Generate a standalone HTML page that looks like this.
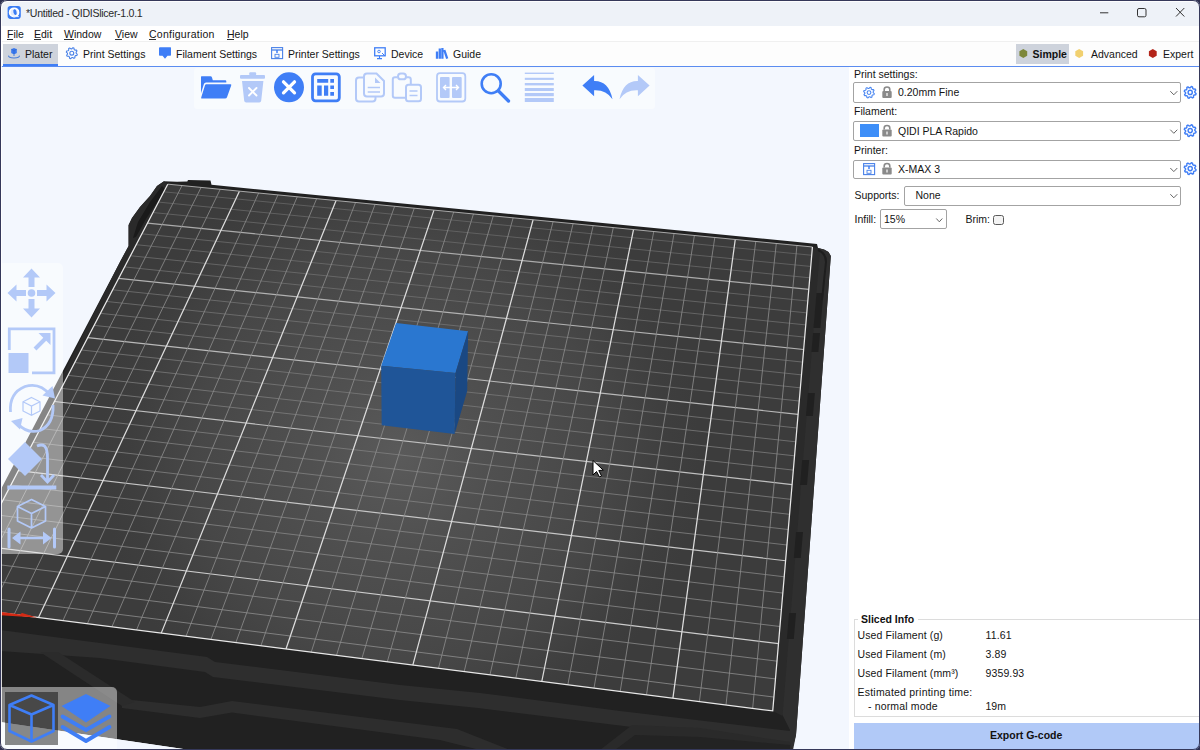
<!DOCTYPE html><html><head><meta charset="utf-8"><style>
html,body{margin:0;padding:0;width:1200px;height:750px;overflow:hidden;background:#f3f7fe;font-family:"Liberation Sans",sans-serif;}
.t{position:absolute;white-space:pre;line-height:1;color:#1a1a1a;}
.r{position:absolute;}
svg{position:absolute;}
</style></head><body>
<svg style="left:0;top:0" width="849" height="750" viewBox="0 0 849 750"><defs>
<radialGradient id="bedg" gradientUnits="userSpaceOnUse" cx="400" cy="455" r="300">
<stop offset="0" stop-color="#5a5a5a"/><stop offset="0.3" stop-color="#505050"/><stop offset="0.68" stop-color="#474747"/><stop offset="0.9" stop-color="#3e3e3e"/><stop offset="1" stop-color="#3c3c3c"/>
</radialGradient>
</defs><polygon points="164,181.2 177,181.8 187.3,181.5 188,180 210.5,180.5 211.5,184.8 795,241.8 817,244 818,248 824,249.5 828.5,252 830.8,256 796,735 792,750 190,750 0,722 0,491 121,260 128.6,246 128.6,225 132,218 140,207 150,196 157,186" fill="#212121"/><polygon points="164,181.2 157,186 150,196 140,207 132,218 128.6,225 128.6,246 121,260 60,380 66,380 167.8,184.4" fill="#2a2a2a"/><polygon points="162,186 150,202 138,222 133,238 136,237 146,219 158,201 165,189" fill="#1a1a1a"/><polygon points="818,248 824,249.5 828.5,252 830.8,256 796,735 793,750 780,750 790,730 781,712 813,247.5" fill="#2f2f2f"/><polygon points="812.4,247 820,249 782.5,716 772.7,711" fill="#2a2a2a"/><polygon points="816.46,293 823.46,293 820.47,328 813.47,328" fill="#202020"/><polygon points="813.04,333 820.04,333 818.41,352 811.41,352" fill="#202020"/><polygon points="807.9,393 814.9,393 812.93,416 805.93,416" fill="#202020"/><polygon points="802.17,460 809.17,460 807.03,485 800.03,485" fill="#202020"/><polygon points="796,532 803,532 800.78,558 793.78,558" fill="#202020"/><polygon points="789.07,613 796.07,613 793.84,639 786.84,639" fill="#202020"/><path d="M818 250Q826 253 826 262L822 300" fill="none" stroke="#1e1e1e" stroke-width="2"/><polygon points="0,630 100,643 207,657 215,662 400,685 480,693 620,711 790,731 790,742 632,727 478,708 400,700 213,677 205,672 100,658 0,651" fill="#2e2e2e"/><polygon points="122,699 200,707 232,701 457,729 510,750 480,750 440,740 232,712.5 200,718 122,708" fill="#2d2d2d"/><polygon points="632,725 700,728 790,742 792,750 600,750" fill="#2a2a2a"/><polygon points="635,735 700,737 790,745 790,750 615,750" fill="#232323"/><polygon points="40,652 58,652 135,702 122,706" fill="#2b2b2b"/><polygon points="0,722 190,750 0,750" fill="#f3f7fe"/><polygon points="167.76,184.17 812.42,246.98 772.74,710.88 -52.22,605.97" fill="url(#bedg)"/><path d="M-45.75 593.56L773.92 697.07" stroke="#8f8f8f" stroke-width="0.8"/><path d="M-37.26 577.27L775.47 678.95" stroke="#8e8e8e" stroke-width="0.8"/><path d="M-28.9 561.25L776.99 661.16" stroke="#8c8c8c" stroke-width="0.8"/><path d="M-20.69 545.5L778.49 643.68" stroke="#cdcdcd" stroke-width="1.2"/><path d="M-12.62 530.02L779.96 626.51" stroke="#8a8a8a" stroke-width="0.8"/><path d="M-4.67 514.79L781.4 609.64" stroke="#898989" stroke-width="0.8"/><path d="M3.14 499.82L782.82 593.07" stroke="#878787" stroke-width="0.8"/><path d="M10.82 485.08L784.21 576.77" stroke="#868686" stroke-width="0.8"/><path d="M18.38 470.59L785.58 560.76" stroke="#c6c6c6" stroke-width="1.2"/><path d="M25.82 456.33L786.93 545.01" stroke="#838383" stroke-width="0.8"/><path d="M33.14 442.3L788.25 529.53" stroke="#828282" stroke-width="0.8"/><path d="M40.34 428.48L789.56 514.3" stroke="#818181" stroke-width="0.8"/><path d="M47.43 414.89L790.84 499.33" stroke="#808080" stroke-width="0.8"/><path d="M54.41 401.5L792.1 484.6" stroke="#bfbfbf" stroke-width="1.2"/><path d="M61.28 388.33L793.34 470.1" stroke="#7d7d7d" stroke-width="0.8"/><path d="M68.05 375.35L794.56 455.84" stroke="#7c7c7c" stroke-width="0.8"/><path d="M74.72 362.57L795.76 441.81" stroke="#7a7a7a" stroke-width="0.8"/><path d="M81.28 349.98L796.94 428" stroke="#797979" stroke-width="0.8"/><path d="M87.75 337.59L798.1 414.4" stroke="#b9b9b9" stroke-width="1.2"/><path d="M94.12 325.37L799.25 401.02" stroke="#767676" stroke-width="0.8"/><path d="M100.39 313.34L800.37 387.84" stroke="#757575" stroke-width="0.8"/><path d="M106.58 301.48L801.48 374.87" stroke="#747474" stroke-width="0.8"/><path d="M112.67 289.8L802.58 362.09" stroke="#737373" stroke-width="0.8"/><path d="M118.68 278.28L803.65 349.5" stroke="#b2b2b2" stroke-width="1.2"/><path d="M124.6 266.93L804.71 337.11" stroke="#707070" stroke-width="0.8"/><path d="M130.43 255.74L805.76 324.9" stroke="#6f6f6f" stroke-width="0.8"/><path d="M136.19 244.7L806.79 312.86" stroke="#6d6d6d" stroke-width="0.8"/><path d="M141.86 233.83L807.8 301.01" stroke="#6c6c6c" stroke-width="0.8"/><path d="M147.46 223.1L808.8 289.32" stroke="#ababab" stroke-width="1.2"/><path d="M152.97 212.52L809.79 277.81" stroke="#6a6a6a" stroke-width="0.8"/><path d="M158.41 202.09L810.76 266.46" stroke="#686868" stroke-width="0.8"/><path d="M163.78 191.8L811.72 255.27" stroke="#676767" stroke-width="0.8"/><path d="M-34.16 608.26L182.04 185.57M-10.01 611.33L201.12 187.43M14.21 614.41L220.26 189.29M62.9 620.61L258.67 193.03M87.37 623.72L277.95 194.91M111.91 626.84L297.27 196.79M136.54 629.97L316.65 198.68M186.03 636.26L355.55 202.47M210.9 639.43L375.08 204.37M235.85 642.6L394.65 206.28M260.88 645.78L414.28 208.19M311.19 652.18L453.68 212.03M336.47 655.4L473.46 213.96M361.84 658.62L493.28 215.89M387.29 661.86L513.16 217.82M438.44 668.36L553.07 221.71M464.15 671.63L573.1 223.66M489.94 674.91L593.19 225.62M515.82 678.2L613.32 227.58M567.83 684.82L653.75 231.52M593.97 688.14L674.05 233.5M620.2 691.48L694.4 235.48M646.51 694.82L714.8 237.47M699.41 701.55L755.75 241.46M726 704.93L776.31 243.46M752.67 708.32L796.93 245.47" stroke="#8a8a8a" stroke-width="0.85" fill="none"/><path d="M38.52 617.51L239.44 191.16M161.24 633.11L336.08 200.57M286 648.98L433.95 210.11M412.82 665.11L533.09 219.77M541.78 681.5L633.51 229.55M672.92 698.18L735.25 239.46" stroke="#dcdcdc" stroke-width="1.25" fill="none"/><path d="M167.76 184.17L812.42 246.98" stroke="#a8a8a8" stroke-width="1"/><path d="M812.42 246.98L772.74 710.88L-52.22 605.97L167.76 184.17" fill="none" stroke="#e8e8e8" stroke-width="1.25"/><path d="M0 611.8L20 614.5L22 613L37 617.6L0 615.2Z" fill="#d42a14"/><polygon points="396.1,323 468.1,331.2 455.5,373 381.2,365.8" fill="#2a77d0"/><polygon points="381.2,365.8 455.5,373 454.6,433.9 381.7,425.2" fill="#1f5598"/><polygon points="455.5,373 468.1,331.2 467.2,391 454.6,433.9" fill="#1a4883"/><path d="M593 460.5L593 475L596.5 471.5L599.5 477L601.5 476L598.8 470.5L603.3 470.2Z" fill="#fff" stroke="#000" stroke-width="1"/></svg>
<div class="r" style="left:194px;top:68px;width:461px;height:41px;background:rgba(255,255,255,0.45);border-radius:3px;"></div>
<svg style="left:0;top:0" width="849" height="750" viewBox="0 0 849 750"><path d="M201.5 76.3H210.5Q211.6 76.3 212 77.5L212.8 80.3H225.3Q226.3 80.3 226.3 81.3V82.5H206Q204.4 82.5 203.9 84L201 93.2V77Q201 76.3 201.5 76.3Z" fill="#3f7ef6"/><path d="M206.2 84.3H230.5Q231.6 84.3 231.2 85.5L227 97.3Q226.5 98.6 225 98.6H202.2Q200.8 98.6 201.2 97.4L205 85.3Q205.3 84.3 206.2 84.3Z" fill="#3f7ef6"/><rect x="249.3" y="72.3" width="6.8" height="3.5" rx="1" fill="#b3c9f8"/><rect x="240" y="75" width="25" height="3.7" rx="1" fill="#b3c9f8"/><path d="M242 81H263.4L261.2 100.8Q261 102.6 259.2 102.6H246.2Q244.4 102.6 244.2 100.8Z" fill="#b3c9f8"/><path d="M249 88L256.5 95.5M256.5 88L249 95.5" stroke="#fff" stroke-width="1.9" stroke-linecap="round"/><circle cx="289" cy="87.3" r="15" fill="#3f7ef6"/><path d="M283.5 81.8L294.5 92.8M294.5 81.8L283.5 92.8" stroke="#fff" stroke-width="3.3" stroke-linecap="round"/><rect x="312.5" y="73.8" width="26.8" height="27" rx="3" fill="none" stroke="#3f7ef6" stroke-width="2.8"/><path d="M317.2 79H328.2V82.7H317.2ZM330.3 79H334V82.7H330.3ZM330.3 85.5H334V89H330.3ZM330.3 92H334V95.8H330.3ZM317.2 85.5H321.7V95.8H317.2ZM324 85.5H328.2V95.8H324Z" fill="#3f7ef6"/><path d="M363.5 77.5H359Q356 77.5 356 80.5V98.5Q356 101.5 359 101.5H372.5Q375.5 101.5 375.5 98.5V97" fill="none" stroke="#b3c9f8" stroke-width="2"/><path d="M367 73.5H376.5L384 81V93.5Q384 96.5 381 96.5H367Q364 96.5 364 93.5V76.5Q364 73.5 367 73.5Z" fill="none" stroke="#b3c9f8" stroke-width="2"/><path d="M375 77.5L380.5 83H375Z" fill="#b3c9f8"/><path d="M367.7 87.5H380M367.7 92H380" stroke="#b3c9f8" stroke-width="1.5"/><path d="M405 97.8H395Q392.8 97.8 392.8 95.6V79.5Q392.8 77.3 395 77.3H397.5M406.2 77.3H408.5Q410.8 77.3 410.8 79.5V84.5" fill="none" stroke="#b3c9f8" stroke-width="2"/><rect x="398" y="73.5" width="8" height="5.8" rx="2.9" fill="none" stroke="#b3c9f8" stroke-width="2"/><rect x="406" y="84.8" width="15" height="16.5" rx="2.5" fill="none" stroke="#b3c9f8" stroke-width="2"/><path d="M409.5 91H417.5M409.5 95.5H417.5" stroke="#b3c9f8" stroke-width="1.5"/><rect x="437" y="73.2" width="28.3" height="28.3" rx="3" fill="none" stroke="#b3c9f8" stroke-width="1.8"/><rect x="440" y="77" width="9.6" height="21" rx="1" fill="#b3c9f8"/><rect x="452" y="77" width="9.7" height="21" rx="1" fill="#b3c9f8"/><path d="M443.5 87.5H458.5M446 85L443.5 87.5L446 90M456 85L458.5 87.5L456 90" stroke="#fff" stroke-width="1.4" fill="none"/><circle cx="491.2" cy="83.7" r="9.5" fill="none" stroke="#3f7ef6" stroke-width="2.6"/><path d="M498.5 91L508.5 101" stroke="#3f7ef6" stroke-width="3.3" stroke-linecap="round"/><rect x="524.8" y="72.6" width="29" height="1.4" fill="#b3c9f8"/><rect x="524.8" y="77.8" width="29" height="2.1" fill="#b3c9f8"/><rect x="524.8" y="83" width="29" height="2.4" fill="#b3c9f8"/><rect x="524.8" y="88" width="29" height="3" fill="#b3c9f8"/><rect x="524.8" y="93" width="29" height="3.2" fill="#b3c9f8"/><rect x="524.8" y="98" width="29" height="4" fill="#b3c9f8"/><path d="M582.4 85.4L594.1 75.1V81.1Q608.5 80.6 612.5 99.2Q606 89.6 594.1 90.3V96.3Z" fill="#3f7ef6"/><path d="M649.6 85.4L637.9 75.1V81.1Q623.5 80.6 619.5 99.2Q626 89.6 637.9 90.3V96.3Z" fill="#b3c9f8"/></svg><div class="r" style="left:1px;top:262.5px;width:61.5px;height:291px;background:rgba(255,255,255,0.45);border-radius:0 5px 5px 0;"></div>
<svg style="left:0;top:0" width="849" height="750" viewBox="0 0 849 750"><g fill="#b3c9f8"><path d="M31.5 268.5L40 277.5H34.5V287H28.5V277.5H23Z"/><path d="M31.5 317.5L40 308.5H34.5V299H28.5V308.5H23Z"/><path d="M7.5 293L16.5 284.5V290H26V296H16.5V301.5Z"/><path d="M55.5 293L46.5 284.5V290H37V296H46.5V301.5Z"/><circle cx="31.5" cy="293" r="3.8"/></g><path d="M9.3 350V328.8H54V372.8H32" fill="none" stroke="#b3c9f8" stroke-width="2.8"/><rect x="8.5" y="353" width="20" height="20" fill="#b3c9f8"/><path d="M35 349L46 338" stroke="#b3c9f8" stroke-width="4"/><path d="M38.5 333H50.5V345Z" fill="#b3c9f8"/><path d="M10.5 412Q9 393 25 386.5Q40 382 50 395" fill="none" stroke="#b3c9f8" stroke-width="2.8"/><path d="M42.5 395.5L55 398.5L52.5 386Z" fill="#b3c9f8"/><path d="M53 405Q54 424 40 430.5Q27 434 18 424" fill="none" stroke="#b3c9f8" stroke-width="2.8"/><path d="M11 421L22.5 418L20 429.5Z" fill="#b3c9f8"/><path d="M31.5 397.5L40 401.8V411L31.5 415.3L23 411V401.8Z M23 401.8L31.5 406L40 401.8M31.5 406V415.3" fill="none" stroke="#b3c9f8" stroke-width="1.2"/><path d="M25 442L42 459L25 476L8 459Z" fill="#b3c9f8"/><path d="M37 446Q41.5 444 44.5 446Q47.5 449 47.5 458V480" fill="none" stroke="#b3c9f8" stroke-width="2.8"/><path d="M41 475L47.5 482L54 475" fill="none" stroke="#b3c9f8" stroke-width="2.8"/><rect x="7.3" y="485.5" width="49" height="4" fill="#b3c9f8"/><path d="M31.5 499.5L45.5 506.5V521L31.5 528L17.5 521V506.5Z M17.5 506.5L31.5 513.5L45.5 506.5M31.5 513.5V528" fill="none" stroke="#b3c9f8" stroke-width="1.7" stroke-linejoin="round"/><path d="M9 529V547M54.5 529V547" stroke="#b3c9f8" stroke-width="3" stroke-linecap="round"/><path d="M14 538H49.5" stroke="#b3c9f8" stroke-width="2.6"/><path d="M20.5 531.5L12 538L20.5 544.5ZM43 531.5L51.5 538L43 544.5Z" fill="#b3c9f8"/></svg><div class="r" style="left:1px;top:687px;width:115.5px;height:63px;background:rgba(255,255,255,0.45);border-radius:0 5px 0 0;"></div>
<div class="r" style="left:5px;top:692px;width:53px;height:53px;background:rgba(0,0,0,0.46);"></div>
<svg style="left:0;top:0" width="849" height="750" viewBox="0 0 849 750"><path d="M31.5 695.5L53.5 705V731L31.5 741.5L9.5 731V705Z M9.5 705L31.5 714.5L53.5 705M31.5 714.5V741.5" fill="none" stroke="#3f7ef6" stroke-width="2.6" stroke-linejoin="round"/><path d="M86 694L110.5 706L86 722.5L61.5 706Z" fill="#3f7ef6"/><path d="M62.5 716.5L86 730L109.5 716.5" fill="none" stroke="#3f7ef6" stroke-width="3.8" stroke-linejoin="round" stroke-linecap="round"/><path d="M62.5 727L86 741L109.5 727" fill="none" stroke="#3f7ef6" stroke-width="3.8" stroke-linejoin="round" stroke-linecap="round"/></svg><div class="r" style="left:0px;top:0px;width:1200px;height:26px;background:#eef2f8;"></div>
<div class="r" style="left:0px;top:26px;width:1200px;height:15px;background:#ffffff;"></div>
<div class="r" style="left:0px;top:41px;width:1200px;height:25px;background:#fdfdfd;"></div>
<div class="r" style="left:0px;top:41px;width:1200px;height:1px;background:#f0f0f0;"></div>
<div class="r" style="left:0px;top:66px;width:1200px;height:1px;background:#5b8cf0;"></div>
<svg style="left:0;top:0" width="30" height="26" viewBox="0 0 30 26"><rect x="7.6" y="5.9" width="13.2" height="13" rx="2.8" fill="#3a7cf4"/><ellipse cx="14.1" cy="12.4" rx="4.4" ry="4.1" fill="#dfe9fd" stroke="#fff" stroke-width="1.8"/><ellipse cx="15" cy="12.1" rx="1.6" ry="2.9" transform="rotate(-15 15 12.1)" fill="#3a7cf4"/><path d="M13 16.6H18.8" stroke="#e8f0ff" stroke-width="1"/></svg><div class="t" style="left:26px;top:7.83px;font-size:10.6px;color:#2a2a2a;letter-spacing:-0.3px;">*Untitled - QIDISlicer-1.0.1</div>
<svg style="left:1090px;top:0" width="110" height="26" viewBox="0 0 110 26"><path d="M10 12.8H18.3" stroke="#333" stroke-width="1"/><rect x="47.5" y="8.5" width="8.5" height="8.3" rx="1.5" fill="none" stroke="#333" stroke-width="1"/><path d="M86 8L94.3 16.5M94.3 8L86 16.5" stroke="#333" stroke-width="1"/></svg><div class="t" style="left:7px;top:28.61px;font-size:10.5px;color:#141414;">File</div>
<div class="r" style="left:7px;top:38.6px;width:6px;height:1px;background:#333;"></div>
<div class="t" style="left:34px;top:28.61px;font-size:10.5px;color:#141414;">Edit</div>
<div class="r" style="left:34px;top:38.6px;width:7px;height:1px;background:#333;"></div>
<div class="t" style="left:64px;top:28.61px;font-size:10.5px;color:#141414;">Window</div>
<div class="r" style="left:64px;top:38.6px;width:10px;height:1px;background:#333;"></div>
<div class="t" style="left:115px;top:28.61px;font-size:10.5px;color:#141414;">View</div>
<div class="r" style="left:115px;top:38.6px;width:7px;height:1px;background:#333;"></div>
<div class="t" style="left:149px;top:28.61px;font-size:10.5px;color:#141414;letter-spacing:0.25px;">Configuration</div>
<div class="r" style="left:149px;top:38.6px;width:7px;height:1px;background:#333;"></div>
<div class="t" style="left:227px;top:28.61px;font-size:10.5px;color:#141414;">Help</div>
<div class="r" style="left:227px;top:38.6px;width:7px;height:1px;background:#333;"></div>
<div class="r" style="left:3px;top:44px;width:55px;height:20px;background:#ced3dc;"></div>
<div class="r" style="left:3px;top:63.5px;width:55px;height:2.5px;background:#3f7ef6;"></div>
<svg style="left:7px;top:46px" width="14" height="14" viewBox="0 0 14 14"><path d="M1.6 9.6Q1 11.8 7 12Q13 11.8 12.4 9.6" fill="none" stroke="#4a7fd8" stroke-width="1.1"/><path d="M4.2 3.2L7 2L9.8 3.2V7L7 8.4L4.2 7Z" fill="#3a7af0"/><path d="M4.2 3.2L7 4.5L9.8 3.2M7 4.5V8.4" stroke="#2a5fc0" stroke-width="0.5" fill="none"/><path d="M7 8.4V10" stroke="#4a7fd8" stroke-width="1"/></svg><div class="t" style="left:25px;top:48.71px;font-size:10.5px;color:#151515;">Plater</div>
<svg style="left:0;top:0" width="1200" height="750" viewBox="0 0 1200 750" ><polygon points="77.29,54.29 76.97,55.34 75.43,55.63 74.89,56.29 74.91,57.86 73.94,58.37 72.65,57.48 71.80,57.57 70.71,58.69 69.66,58.37 69.37,56.83 68.71,56.29 67.14,56.31 66.63,55.34 67.52,54.05 67.43,53.20 66.31,52.11 66.63,51.06 68.17,50.77 68.71,50.11 68.69,48.54 69.66,48.03 70.95,48.92 71.80,48.83 72.89,47.71 73.94,48.03 74.23,49.57 74.89,50.11 76.46,50.09 76.97,51.06 76.08,52.35 76.17,53.20" fill="none" stroke="#4a82e8" stroke-width="1.1" stroke-linejoin="round"/><circle cx="71.8" cy="53.2" r="1.96" fill="none" stroke="#4a82e8" stroke-width="1.1"/><path d="M160 47.2H170.5Q171 47.2 171 48V55Q171 55.7 170.3 55.7H167.5L165 58.7L162.5 55.7H159.8Q159 55.7 159 55V48Q159 47.2 160 47.2Z" fill="#3f7ef6"/><rect x="271.6" y="47.6" width="11" height="11" fill="none" stroke="#4a82e8" stroke-width="1.1"/><path d="M271.6 50H282.6" stroke="#4a82e8" stroke-width="1.3"/><path d="M277 50V53" stroke="#3f7ef6" stroke-width="1.5"/><rect x="275" y="54.3" width="4" height="3" fill="none" stroke="#4a82e8" stroke-width="0.9"/><rect x="374.7" y="47.8" width="10.5" height="8" fill="none" stroke="#3f7ef6" stroke-width="1.3"/><path d="M377 58.6H382M379.5 56V58.6" stroke="#3f7ef6" stroke-width="1.1"/><circle cx="379" cy="51.5" r="1.3" fill="none" stroke="#3f7ef6" stroke-width="0.9"/><path d="M382 53L385 56" stroke="#3f7ef6" stroke-width="1"/><path d="M437 51.5V58.7M439.8 48.5V58.7M442.4 48V58.7M444.3 50L447.2 58.7" stroke="#3f7ef6" stroke-width="2.3"/></svg><div class="r" style="left:1016px;top:43.5px;width:53px;height:20.5px;background:#ced3dc;"></div>
<svg style="left:0;top:0" width="1200" height="750" viewBox="0 0 1200 750"><polygon points="1027.20,55.75 1023.30,58.00 1019.40,55.75 1019.40,51.25 1023.30,49.00 1027.20,51.25" fill="#7d873a"/><polygon points="1083.10,55.75 1079.20,58.00 1075.30,55.75 1075.30,51.25 1079.20,49.00 1083.10,51.25" fill="#f1d06f"/><polygon points="1156.70,55.75 1152.80,58.00 1148.90,55.75 1148.90,51.25 1152.80,49.00 1156.70,51.25" fill="#b42419"/></svg><div class="t" style="left:1032.5px;top:48.71px;font-size:10.5px;font-weight:700;color:#111;">Simple</div>
<div class="t" style="left:1091px;top:48.71px;font-size:10.5px;color:#151515;">Advanced</div>
<div class="t" style="left:1163px;top:48.71px;font-size:10.5px;color:#151515;">Expert</div>
<div class="t" style="left:83px;top:48.71px;font-size:10.5px;color:#151515;">Print Settings</div>
<div class="t" style="left:176px;top:48.71px;font-size:10.5px;color:#151515;">Filament Settings</div>
<div class="t" style="left:288px;top:48.71px;font-size:10.5px;color:#151515;">Printer Settings</div>
<div class="t" style="left:391px;top:48.71px;font-size:10.5px;color:#151515;">Device</div>
<div class="t" style="left:453px;top:48.71px;font-size:10.5px;color:#151515;">Guide</div>
<div class="r" style="left:849px;top:67px;width:351px;height:683px;background:#ffffff;"></div>
<div class="t" style="left:854px;top:68.86px;font-size:10.5px;color:#141414;">Print settings:</div>
<div class="r" style="left:853px;top:82.3px;width:328px;height:20.3px;background:#fff;box-sizing:border-box;border:1px solid #a3a3a3;border-radius:2px;"></div>
<div class="t" style="left:854px;top:106.31px;font-size:10.5px;color:#141414;">Filament:</div>
<div class="r" style="left:853px;top:121.2px;width:328px;height:19.4px;background:#fff;box-sizing:border-box;border:1px solid #a3a3a3;border-radius:2px;"></div>
<div class="t" style="left:854px;top:145.36px;font-size:10.5px;color:#141414;">Printer:</div>
<div class="r" style="left:853px;top:159.5px;width:328px;height:19.4px;background:#fff;box-sizing:border-box;border:1px solid #a3a3a3;border-radius:2px;"></div>
<div class="t" style="left:854.5px;top:190.41px;font-size:10.5px;color:#141414;">Supports:</div>
<div class="r" style="left:904.3px;top:186px;width:276.7px;height:19.7px;background:#fff;box-sizing:border-box;border:1px solid #a3a3a3;border-radius:2px;"></div>
<div class="t" style="left:915.5px;top:190.41px;font-size:10.5px;color:#141414;">None</div>
<div class="t" style="left:854.5px;top:213.61px;font-size:10.5px;color:#141414;">Infill:</div>
<div class="r" style="left:880px;top:209.3px;width:66.5px;height:19.3px;background:#fff;box-sizing:border-box;border:1px solid #a3a3a3;border-radius:2px;"></div>
<div class="t" style="left:884px;top:213.61px;font-size:10.5px;color:#141414;">15%</div>
<div class="t" style="left:965.5px;top:213.61px;font-size:10.5px;color:#141414;">Brim:</div>
<div class="r" style="left:993px;top:214.5px;width:10.5px;height:10.5px;background:#f3f3f3;box-sizing:border-box;border:1px solid #5a5a5a;border-radius:2.5px;"></div>
<div class="t" style="left:898px;top:87.31px;font-size:10.5px;color:#141414;">0.20mm Fine</div>
<div class="t" style="left:898px;top:125.71px;font-size:10.5px;color:#141414;">QIDI PLA Rapido</div>
<div class="t" style="left:898px;top:163.91px;font-size:10.5px;color:#141414;">X-MAX 3</div>
<div class="r" style="left:859.5px;top:124.2px;width:19px;height:12.8px;background:#3d8ef8;"></div>
<svg style="left:0;top:0" width="1200" height="750" viewBox="0 0 1200 750"><path d="M1170.3 91.2L1173.8 94.8L1177.3 91.2" fill="none" stroke="#555" stroke-width="0.9"/><path d="M1170.3 129.7L1173.8 133.3L1177.3 129.7" fill="none" stroke="#555" stroke-width="0.9"/><path d="M1170.3 168.0L1173.8 171.60000000000002L1177.3 168.0" fill="none" stroke="#555" stroke-width="0.9"/><path d="M1170.3 194.2L1173.8 197.8L1177.3 194.2" fill="none" stroke="#555" stroke-width="0.9"/><path d="M936.3 218.5L939.3 221.8L942.3 218.5" fill="none" stroke="#555" stroke-width="0.9"/><polygon points="1196.08,93.57 1195.74,94.70 1194.09,95.00 1193.51,95.71 1193.53,97.39 1192.50,97.94 1191.11,96.99 1190.20,97.08 1189.03,98.28 1187.90,97.94 1187.60,96.29 1186.89,95.71 1185.21,95.73 1184.66,94.70 1185.61,93.31 1185.52,92.40 1184.32,91.23 1184.66,90.10 1186.31,89.80 1186.89,89.09 1186.87,87.41 1187.90,86.86 1189.29,87.81 1190.20,87.72 1191.37,86.52 1192.50,86.86 1192.80,88.51 1193.51,89.09 1195.19,89.07 1195.74,90.10 1194.79,91.49 1194.88,92.40" fill="none" stroke="#3f7ef6" stroke-width="1.4" stroke-linejoin="round"/><circle cx="1190.2" cy="92.4" r="2.10" fill="none" stroke="#3f7ef6" stroke-width="1.4"/><polygon points="1196.08,131.77 1195.74,132.90 1194.09,133.20 1193.51,133.91 1193.53,135.59 1192.50,136.14 1191.11,135.19 1190.20,135.28 1189.03,136.48 1187.90,136.14 1187.60,134.49 1186.89,133.91 1185.21,133.93 1184.66,132.90 1185.61,131.51 1185.52,130.60 1184.32,129.43 1184.66,128.30 1186.31,128.00 1186.89,127.29 1186.87,125.61 1187.90,125.06 1189.29,126.01 1190.20,125.92 1191.37,124.72 1192.50,125.06 1192.80,126.71 1193.51,127.29 1195.19,127.27 1195.74,128.30 1194.79,129.69 1194.88,130.60" fill="none" stroke="#3f7ef6" stroke-width="1.4" stroke-linejoin="round"/><circle cx="1190.2" cy="130.6" r="2.10" fill="none" stroke="#3f7ef6" stroke-width="1.4"/><polygon points="1196.08,169.77 1195.74,170.90 1194.09,171.20 1193.51,171.91 1193.53,173.59 1192.50,174.14 1191.11,173.19 1190.20,173.28 1189.03,174.48 1187.90,174.14 1187.60,172.49 1186.89,171.91 1185.21,171.93 1184.66,170.90 1185.61,169.51 1185.52,168.60 1184.32,167.43 1184.66,166.30 1186.31,166.00 1186.89,165.29 1186.87,163.61 1187.90,163.06 1189.29,164.01 1190.20,163.92 1191.37,162.72 1192.50,163.06 1192.80,164.71 1193.51,165.29 1195.19,165.27 1195.74,166.30 1194.79,167.69 1194.88,168.60" fill="none" stroke="#3f7ef6" stroke-width="1.4" stroke-linejoin="round"/><circle cx="1190.2" cy="168.6" r="2.10" fill="none" stroke="#3f7ef6" stroke-width="1.4"/><polygon points="874.30,93.65 873.99,94.67 872.50,94.94 871.98,95.58 872.00,97.09 871.07,97.59 869.82,96.73 869.00,96.81 867.95,97.90 866.93,97.59 866.66,96.10 866.02,95.58 864.51,95.60 864.01,94.67 864.87,93.42 864.79,92.60 863.70,91.55 864.01,90.53 865.50,90.26 866.02,89.62 866.00,88.11 866.93,87.61 868.18,88.47 869.00,88.39 870.05,87.30 871.07,87.61 871.34,89.10 871.98,89.62 873.49,89.60 873.99,90.53 873.13,91.78 873.21,92.60" fill="none" stroke="#4a86f0" stroke-width="1.1" stroke-linejoin="round"/><circle cx="869" cy="92.6" r="1.89" fill="none" stroke="#4a86f0" stroke-width="1.1"/><path d="M884.2 91.0V89.5Q884.2 87.0 887 87.0Q889.8 87.0 889.8 89.5V91.0" fill="none" stroke="#8a8a8a" stroke-width="1.6"/><rect x="882.3" y="91.0" width="9.4" height="7" rx="1" fill="#8a8a8a"/><rect x="886.4" y="93.0" width="1.2" height="3" fill="#fff"/><path d="M884.2 129.5V128Q884.2 125.5 887 125.5Q889.8 125.5 889.8 128V129.5" fill="none" stroke="#8a8a8a" stroke-width="1.6"/><rect x="882.3" y="129.5" width="9.4" height="7" rx="1" fill="#8a8a8a"/><rect x="886.4" y="131.5" width="1.2" height="3" fill="#fff"/><path d="M884.2 167.5V166Q884.2 163.5 887 163.5Q889.8 163.5 889.8 166V167.5" fill="none" stroke="#8a8a8a" stroke-width="1.6"/><rect x="882.3" y="167.5" width="9.4" height="7" rx="1" fill="#8a8a8a"/><rect x="886.4" y="169.5" width="1.2" height="3" fill="#fff"/><rect x="863.6" y="163.6" width="11" height="11" fill="none" stroke="#4a82e8" stroke-width="1.1"/><path d="M863.6 166H874.6" stroke="#4a82e8" stroke-width="1.3"/><path d="M869 166V169" stroke="#3f7ef6" stroke-width="1.5"/><rect x="867" y="170.3" width="4" height="3" fill="none" stroke="#4a82e8" stroke-width="0.9"/></svg><div class="r" style="left:853.5px;top:619px;width:346px;height:98px;background:transparent;box-sizing:border-box;border:1px solid #dcdcdc;border-right:none;"></div>
<div class="r" style="left:858px;top:612px;width:60px;height:12px;background:#fff;"></div>
<div class="t" style="left:861px;top:613.51px;font-size:10.5px;font-weight:700;color:#111;">Sliced Info</div>
<div class="t" style="left:857.5px;top:629.51px;font-size:10.5px;color:#141414;letter-spacing:0.12px;">Used Filament (g)</div>
<div class="t" style="left:985.5px;top:629.51px;font-size:10.5px;color:#141414;letter-spacing:0.12px;">11.61</div>
<div class="t" style="left:857.5px;top:648.71px;font-size:10.5px;color:#141414;letter-spacing:0.12px;">Used Filament (m)</div>
<div class="t" style="left:985.5px;top:648.71px;font-size:10.5px;color:#141414;letter-spacing:0.12px;">3.89</div>
<div class="t" style="left:857.5px;top:667.71px;font-size:10.5px;color:#141414;letter-spacing:0.12px;">Used Filament (mm³)</div>
<div class="t" style="left:985.5px;top:667.71px;font-size:10.5px;color:#141414;letter-spacing:0.12px;">9359.93</div>
<div class="t" style="left:857.5px;top:687.11px;font-size:10.5px;color:#141414;letter-spacing:0.22px;">Estimated printing time:</div>
<div class="t" style="left:868px;top:700.71px;font-size:10.5px;color:#141414;letter-spacing:0.15px;">- normal mode</div>
<div class="t" style="left:985.5px;top:700.71px;font-size:10.5px;color:#141414;">19m</div>
<div class="r" style="left:853.5px;top:723px;width:346px;height:27px;background:#b1c9f7;"></div>
<div class="t" style="left:990px;top:729.71px;font-size:10.5px;font-weight:700;color:#111;">Export G-code</div>
<div style="position:absolute;left:0;top:0;width:1200px;height:750px;box-sizing:border-box;border:1px solid #35385a;border-radius:7px;box-shadow:0 0 0 10px #2e3050, inset 1px 1px 0 0 rgba(255,255,255,0.85);pointer-events:none"></div></body></html>
